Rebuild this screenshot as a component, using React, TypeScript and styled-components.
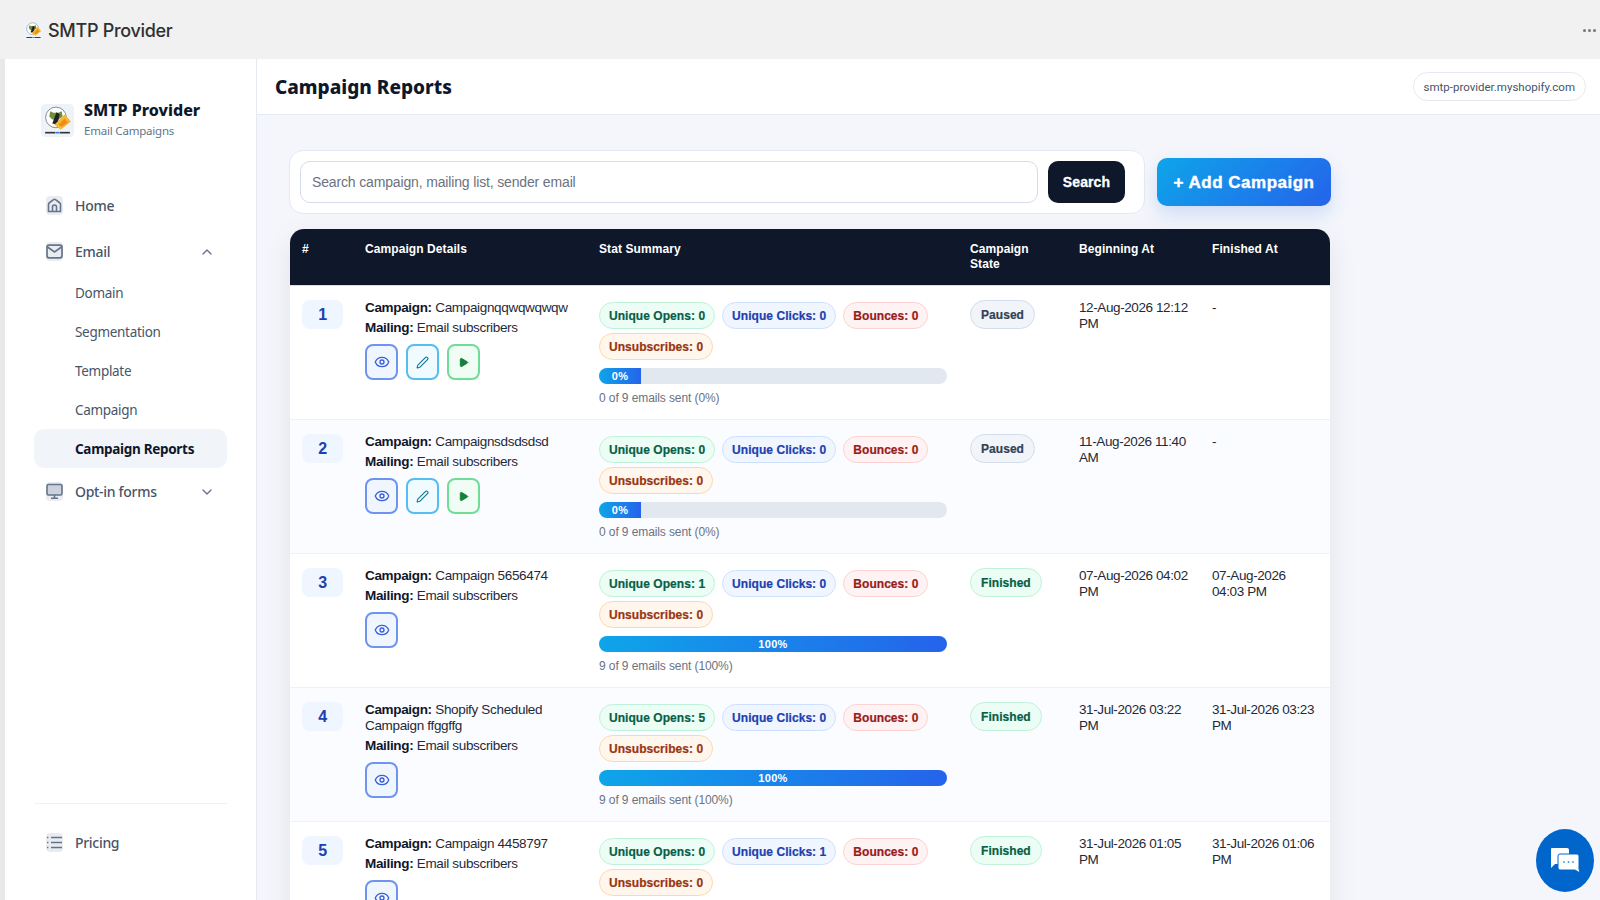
import React from 'react';
import styled, { createGlobalStyle } from 'styled-components';
import { ChevronDown, ChevronUp, Eye, Pen, Play } from 'lucide-react';

const GlobalStyle = createGlobalStyle`
  html, body {
    margin: 0;
    height: 100%;
    overflow: hidden;
    background: #f1f1f1;
    font-family: "Liberation Sans", Arial, sans-serif;
  }
`;

const Frame = styled.div`
  width: 1600px;
  height: 900px;
  display: flex;
  flex-direction: column;
  overflow: hidden;
  position: relative;
`;

const TopBar = styled.header`
  height: 59px;
  flex: none;
  box-sizing: border-box;
  background: #f1f1f1;
  display: flex;
  align-items: center;
  justify-content: space-between;
  padding: 2px 4px 0 24px;
`;

const AppTitle = styled.div`
  display: flex;
  align-items: center;
  gap: 5px;
  font-family: Inter, sans-serif;
  font-size: 18px;
  font-weight: 500;
  letter-spacing: -0.3px;
  color: #303030;
`;

const Dots = styled.div`
  display: flex;
  gap: 2px;
  span {
    width: 3px;
    height: 3px;
    border-radius: 50%;
    background: #777;
  }
`;

const Body = styled.div`
  flex: 1;
  min-height: 0;
  display: flex;
  padding-left: 5px;
  background: #e8e8e8;
`;

const Sidebar = styled.aside`
  width: 193px;
  flex: none;
  background: #fff;
  border-right: 1px solid #e5e9f2;
  display: flex;
  flex-direction: column;
  padding: 41px 29px 0;
`;

const Brand = styled.div`
  display: flex;
  align-items: center;
  gap: 10px;
  padding-left: 7px;
  margin-bottom: 46px;
`;

const BrandName = styled.div`
  font-family: "Noto Sans", sans-serif;
  font-size: 16px;
  font-weight: 800;
  line-height: 20px;
  color: #0f172a;
`;

const BrandSub = styled.div`
  margin-top: 2px;
  font-family: "Noto Sans", sans-serif;
  font-size: 11.5px;
  letter-spacing: -0.2px;
  line-height: 18px;
  color: #64748b;
`;

const NavRow = styled.div<{ $gap?: number }>`
  display: flex;
  align-items: center;
  height: 39px;
  margin-bottom: ${({ $gap }) => $gap ?? 7}px;
  padding: 0 12px;
  font-family: "Noto Sans", sans-serif;
  font-size: 14px;
  font-weight: 500;
  letter-spacing: -0.3px;
  color: #475569;
  gap: 12px;
`;

const NavIcon = styled.span`
  width: 17px;
  height: 19px;
  border-radius: 4px;
  background: #e9ecf1;
  display: flex;
  align-items: center;
  justify-content: center;
  flex: none;
`;

const Chevron = styled.span`
  margin-left: auto;
  display: flex;
  color: #64748b;
`;

const SubItem = styled.div<{ $active?: boolean }>`
  height: 39px;
  display: flex;
  align-items: center;
  padding-left: 41px;
  border-radius: 10px;
  font-family: "Noto Sans", sans-serif;
  font-size: 13.5px;
  letter-spacing: -0.3px;
  font-weight: ${({ $active }) => ($active ? 700 : 400)};
  color: ${({ $active }) => ($active ? '#0f172a' : '#475569')};
  background: ${({ $active }) => ($active ? '#f1f4f9' : 'transparent')};
`;

const SubList = styled.div`
  margin-top: -5px;
  margin-bottom: 4px;
`;

const SideFoot = styled.div`
  margin-top: auto;
  border-top: 1px solid #eef1f5;
  padding: 19px 0 38px;
`;

const Main = styled.main`
  flex: 1;
  min-width: 0;
  display: flex;
  flex-direction: column;
  background: #f4f6fb;
`;

const PageHeader = styled.div`
  height: 56px;
  flex: none;
  box-sizing: border-box;
  background: #fff;
  border-bottom: 1px solid #e5e9f2;
  display: flex;
  align-items: center;
  justify-content: space-between;
  padding: 2px 14px 2px 18px;
`;

const PageTitle = styled.h1`
  margin: 0;
  font-family: "Noto Sans", sans-serif;
  font-size: 19px;
  font-weight: 800;
  color: #0f172a;
`;

const StorePill = styled.div`
  height: 29px;
  box-sizing: border-box;
  padding: 0 10px;
  border: 1px solid #e5e9f2;
  border-radius: 999px;
  display: flex;
  align-items: center;
  font-family: Roboto, sans-serif;
  font-size: 11.5px;
  color: #475569;
`;

const Content = styled.div`
  width: 1042px;
  padding: 35px 0 0 32px;
`;

const ToolRow = styled.div`
  display: flex;
  align-items: center;
  gap: 12px;
  margin-bottom: 15px;
`;

const SearchCard = styled.form`
  width: 856px;
  height: 64px;
  box-sizing: border-box;
  background: #fff;
  border: 1px solid #e5e9f6;
  border-radius: 14px;
  padding: 10px 19px 10px 10px;
  display: flex;
  gap: 10px;
`;

const SearchInput = styled.input`
  flex: 1;
  min-width: 0;
  box-sizing: border-box;
  height: 42px;
  border: 1px solid #d5dcea;
  border-radius: 10px;
  padding: 0 11px;
  font-family: "Liberation Sans", sans-serif;
  font-size: 14px;
  letter-spacing: -0.15px;
  color: #0f172a;
  outline: none;
  &::placeholder {
    color: #6b7280;
  }
`;

const SearchButton = styled.button`
  width: 77px;
  height: 42px;
  border: none;
  border-radius: 10px;
  background: #0f172a;
  color: #fff;
  font-family: "Liberation Sans", sans-serif;
  font-size: 14px;
  font-weight: 700;
  letter-spacing: 0.1px;
  -webkit-text-stroke: 0.3px #fff;
`;

const AddButton = styled.button`
  width: 174px;
  height: 48px;
  padding-top: 3px;
  border: none;
  border-radius: 10px;
  background: linear-gradient(135deg, #0ea5e9, #2563eb);
  box-shadow: 0 8px 18px rgba(37, 99, 235, 0.18);
  color: #fff;
  font-family: "Liberation Sans", sans-serif;
  font-size: 17px;
  font-weight: 700;
  letter-spacing: 0.5px;
  -webkit-text-stroke: 0.4px #fff;
`;

const TableCard = styled.div`
  width: 1040px;
  margin-left: 1px;
  border-radius: 14px 14px 0 0;
  box-shadow: 0 10px 30px rgba(15, 23, 42, 0.08);
  background: #fff;
`;

const Table = styled.table`
  width: 100%;
  table-layout: fixed;
  border-collapse: separate;
  border-spacing: 0;
`;

const Th = styled.th<{ $w: number }>`
  width: ${({ $w }) => $w}px;
  box-sizing: border-box;
  background: #0f172a;
  color: #fff;
  text-align: left;
  vertical-align: top;
  height: 57px;
  padding: 13px 12px 0;
  font-size: 12px;
  line-height: 15px;
  font-weight: 700;
  letter-spacing: 0.08px;
  border-bottom: 1px solid #d5dcea;
  &:first-child {
    border-top-left-radius: 14px;
  }
  &:last-child {
    border-top-right-radius: 14px;
  }
`;

const Tr = styled.tr<{ $alt: boolean }>`
  background: ${({ $alt }) => ($alt ? '#fbfcff' : '#fff')};
`;

const Td = styled.td`
  vertical-align: top;
  padding: 14px 12px 14px;
  font-size: 13.5px;
  letter-spacing: -0.33px;
  line-height: 16px;
  color: #1f2937;
  border-bottom: 1px solid #eef1f6;
`;

const DateTd = styled(Td)`
  letter-spacing: -0.4px;
`;

const NumBadge = styled.div`
  width: 41px;
  height: 29px;
  border-radius: 8px;
  background: #eff6ff;
  color: #1e40af;
  font-size: 16px;
  font-weight: 700;
  display: flex;
  align-items: center;
  justify-content: center;
`;

const DetailLine = styled.div`
  margin-bottom: 4px;
  color: #1f2937;
  b {
    color: #0f172a;
  }
`;

const Actions = styled.div`
  display: flex;
  gap: 8px;
  margin-top: 8px;
`;

const tones = {
  view: { border: '#6f94f0', bg: '#eff6ff', color: '#3b5fd9' },
  edit: { border: '#55bdf0', bg: '#f0fbff', color: '#0e7490' },
  run: { border: '#6fdc97', bg: '#f0fdf4', color: '#15803d' },
};

const ActionButton = styled.button<{ $tone: keyof typeof tones }>`
  width: 33px;
  height: 36px;
  padding: 0;
  border-radius: 8px;
  border: 2px solid ${({ $tone }) => tones[$tone].border};
  background: ${({ $tone }) => tones[$tone].bg};
  color: ${({ $tone }) => tones[$tone].color};
  display: flex;
  align-items: center;
  justify-content: center;
`;

const pillTones = {
  green: { border: '#bff2d8', bg: '#ecfdf5', color: '#065f46' },
  blue: { border: '#cfe0fe', bg: '#eff6ff', color: '#1e40af' },
  red: { border: '#fdd2d2', bg: '#fef2f2', color: '#991b1b' },
  orange: { border: '#fed7aa', bg: '#fff7ed', color: '#9a3412' },
  slate: { border: '#d5dcea', bg: '#f1f5f9', color: '#334155' },
};

const Pills = styled.div`
  display: flex;
  flex-wrap: wrap;
  gap: 4px 7px;
  margin-top: 2px;
  width: 350px;
`;

const Pill = styled.span<{ $tone: keyof typeof pillTones }>`
  height: 27px;
  box-sizing: border-box;
  padding: 0 9px;
  border-radius: 999px;
  border: 1px solid ${({ $tone }) => pillTones[$tone].border};
  background: ${({ $tone }) => pillTones[$tone].bg};
  color: ${({ $tone }) => pillTones[$tone].color};
  font-size: 12px;
  font-weight: 700;
  letter-spacing: 0.05px;
  -webkit-text-stroke: 0.2px currentColor;
  display: inline-flex;
  align-items: center;
  white-space: nowrap;
`;

const StatePill = styled(Pill)`
  height: 29px;
  padding: 0 10px;
`;

const Track = styled.div`
  width: 348px;
  height: 16px;
  margin-top: 8px;
  border-radius: 999px;
  background: #e2e8f0;
  overflow: hidden;
`;

const Fill = styled.div`
  height: 100%;
  min-width: 42px;
  background: linear-gradient(90deg, #0ea5e9, #2563eb);
  color: #fff;
  font-size: 11px;
  font-weight: 700;
  letter-spacing: 0.3px;
  display: flex;
  align-items: center;
  justify-content: center;
`;

const SentNote = styled.div`
  margin-top: 7px;
  font-size: 12px;
  letter-spacing: -0.1px;
  line-height: 14px;
  color: #6b7280;
`;

const ChatBubble = styled.div`
  position: absolute;
  left: 1536px;
  top: 829px;
  width: 58px;
  height: 63px;
  border-radius: 50%;
  background: #0066cc;
  display: flex;
  align-items: center;
  justify-content: center;
`;

const Logo = ({ size }: { size: number }) => (
  <svg width={size} height={size} viewBox="0 0 32 32">
    <rect width="32" height="32" rx="4" fill="#eef3fa" />
    <circle cx="14.5" cy="13" r="10" fill="#fff" stroke="#7d828a" strokeWidth="0.9" />
    <path d="M9 7l3 1.5h5l3-1.5 1 5-4 3h-6l-3-3z" fill="#6f8f3a" />
    <path d="M11 19l4-11 3 2-2 10z" fill="#222" />
    <path d="M13 20l10-10 6 7-10 8z" fill="#f5b82e" />
    <path d="M17 20l6-6 3 4-6 4z" fill="#f08a1d" />
    <rect x="4" y="27" width="10" height="1.6" fill="#333" />
    <rect x="14.5" y="27" width="3" height="1.6" fill="#2b7de0" />
    <rect x="18" y="27" width="10" height="1.6" fill="#333" />
  </svg>
);

const HomeIcon = () => (
  <svg width="17" height="17" viewBox="0 0 17 17" fill="none" stroke="#64748b" strokeWidth="1.6">
    <path d="M2.5 14.5V7.2a1.6 1.6 0 0 1 .6-1.2l4.4-3.3a1.6 1.6 0 0 1 2 0L13.9 6a1.6 1.6 0 0 1 .6 1.2v7.3z" />
    <path d="M6.5 14.5V10a2 2 0 0 1 4 0v4.5" />
  </svg>
);

const MailIcon = () => (
  <svg width="17" height="15" viewBox="0 0 17 15" fill="none" stroke="#64748b" strokeWidth="1.7">
    <rect x="1" y="1.2" width="15" height="12.6" rx="2" />
    <path d="M1.5 3l7 5 7-5" />
  </svg>
);

const MonitorIcon = () => (
  <svg width="17" height="17" viewBox="0 0 17 17" fill="none" stroke="#64748b" strokeWidth="1.6">
    <rect x="1" y="1.5" width="15" height="10.5" rx="1.5" fill="#cbd2dc" />
    <path d="M8.5 12v3M5 15.2h7" />
  </svg>
);

const ListIcon = () => (
  <svg width="17" height="15" viewBox="0 0 17 15" fill="none" stroke="#64748b" strokeWidth="1.7">
    <path d="M5 2.5h11M5 7.5h11M5 12.5h11M1 2.5h1.4M1 7.5h1.4M1 12.5h1.4" />
  </svg>
);

const ChatIcon = () => (
  <svg width="32" height="28" viewBox="0 0 32 28">
    <path d="M3 1h15a2 2 0 0 1 2 2v12a2 2 0 0 1-2 2H6l-4 4V2a1 1 0 0 1 1-1z" fill="#fff" />
    <path d="M11 7h17a2 2 0 0 1 2 2v13l1 4-5-3H11a2 2 0 0 1-2-2V9a2 2 0 0 1 2-2z" fill="#fff" stroke="#0066cc" strokeWidth="1" />
    <circle cx="15" cy="15" r="1" fill="#5b9bdc" />
    <circle cx="19.5" cy="15" r="1" fill="#5b9bdc" />
    <circle cx="24" cy="15" r="1" fill="#5b9bdc" />
  </svg>
);

type Report = {
  name: string;
  opens: number;
  clicks: number;
  paused: boolean;
  start: string;
  end: string;
};

const reports: Report[] = [
  { name: 'Campaignqqwqwqwqw', opens: 0, clicks: 0, paused: true, start: '12-Aug-2026 12:12 PM', end: '-' },
  { name: 'Campaignsdsdsdsd', opens: 0, clicks: 0, paused: true, start: '11-Aug-2026 11:40 AM', end: '-' },
  { name: 'Campaign 5656474', opens: 1, clicks: 0, paused: false, start: '07-Aug-2026 04:02 PM', end: '07-Aug-2026 04:03 PM' },
  { name: 'Shopify Scheduled Campaign ffggffg', opens: 5, clicks: 0, paused: false, start: '31-Jul-2026 03:22 PM', end: '31-Jul-2026 03:23 PM' },
  { name: 'Campaign 4458797', opens: 0, clicks: 1, paused: false, start: '31-Jul-2026 01:05 PM', end: '31-Jul-2026 01:06 PM' },
];

const columns = [
  { label: '#', w: 63 },
  { label: 'Campaign Details', w: 234 },
  { label: 'Stat Summary', w: 371 },
  { label: 'Campaign State', w: 109 },
  { label: 'Beginning At', w: 133 },
  { label: 'Finished At', w: 130 },
];

export default function App() {
  return (
    <Frame>
      <GlobalStyle />
      <TopBar>
        <AppTitle>
          <Logo size={19} />
          SMTP Provider
        </AppTitle>
        <Dots>
          <span />
          <span />
          <span />
        </Dots>
      </TopBar>
      <Body>
        <Sidebar>
          <Brand>
            <Logo size={33} />
            <div>
              <BrandName>SMTP Provider</BrandName>
              <BrandSub>Email Campaigns</BrandSub>
            </div>
          </Brand>
          <NavRow>
            <NavIcon>
              <HomeIcon />
            </NavIcon>
            Home
          </NavRow>
          <NavRow>
            <NavIcon>
              <MailIcon />
            </NavIcon>
            Email
            <Chevron>
              <ChevronUp size={16} />
            </Chevron>
          </NavRow>
          <SubList>
            <SubItem>Domain</SubItem>
            <SubItem>Segmentation</SubItem>
            <SubItem>Template</SubItem>
            <SubItem>Campaign</SubItem>
            <SubItem $active>Campaign Reports</SubItem>
          </SubList>
          <NavRow>
            <NavIcon>
              <MonitorIcon />
            </NavIcon>
            Opt-in forms
            <Chevron>
              <ChevronDown size={16} />
            </Chevron>
          </NavRow>
          <SideFoot>
            <NavRow $gap={0}>
              <NavIcon>
                <ListIcon />
              </NavIcon>
              Pricing
            </NavRow>
          </SideFoot>
        </Sidebar>
        <Main>
          <PageHeader>
            <PageTitle>Campaign Reports</PageTitle>
            <StorePill>smtp-provider.myshopify.com</StorePill>
          </PageHeader>
          <Content>
            <ToolRow>
              <SearchCard onSubmit={(e) => e.preventDefault()}>
                <SearchInput placeholder="Search campaign, mailing list, sender email" />
                <SearchButton>Search</SearchButton>
              </SearchCard>
              <AddButton>+ Add Campaign</AddButton>
            </ToolRow>
            <TableCard>
              <Table>
                <thead>
                  <tr>
                    {columns.map((c) => (
                      <Th key={c.label} $w={c.w}>
                        {c.label}
                      </Th>
                    ))}
                  </tr>
                </thead>
                <tbody>
                  {reports.map((r, i) => (
                    <Tr key={r.name} $alt={i % 2 === 1}>
                      <Td>
                        <NumBadge>{i + 1}</NumBadge>
                      </Td>
                      <Td>
                        <DetailLine>
                          <b>Campaign:</b> {r.name}
                        </DetailLine>
                        <DetailLine>
                          <b>Mailing:</b> Email subscribers
                        </DetailLine>
                        <Actions>
                          <ActionButton $tone="view">
                            <Eye size={16} />
                          </ActionButton>
                          {r.paused && (
                            <>
                              <ActionButton $tone="edit">
                                <Pen size={13} />
                              </ActionButton>
                              <ActionButton $tone="run">
                                <Play size={11} fill="currentColor" />
                              </ActionButton>
                            </>
                          )}
                        </Actions>
                      </Td>
                      <Td>
                        <Pills>
                          <Pill $tone="green">Unique Opens: {r.opens}</Pill>
                          <Pill $tone="blue">Unique Clicks: {r.clicks}</Pill>
                          <Pill $tone="red">Bounces: 0</Pill>
                          <Pill $tone="orange">Unsubscribes: 0</Pill>
                        </Pills>
                        <Track>
                          <Fill style={{ width: r.paused ? '0%' : '100%' }}>{r.paused ? '0%' : '100%'}</Fill>
                        </Track>
                        <SentNote>
                          {r.paused ? '0 of 9 emails sent (0%)' : '9 of 9 emails sent (100%)'}
                        </SentNote>
                      </Td>
                      <Td>
                        <StatePill $tone={r.paused ? 'slate' : 'green'}>
                          {r.paused ? 'Paused' : 'Finished'}
                        </StatePill>
                      </Td>
                      <DateTd>{r.start}</DateTd>
                      <DateTd>{r.end}</DateTd>
                    </Tr>
                  ))}
                </tbody>
              </Table>
            </TableCard>
          </Content>
        </Main>
      </Body>
      <ChatBubble>
        <ChatIcon />
      </ChatBubble>
    </Frame>
  );
}
